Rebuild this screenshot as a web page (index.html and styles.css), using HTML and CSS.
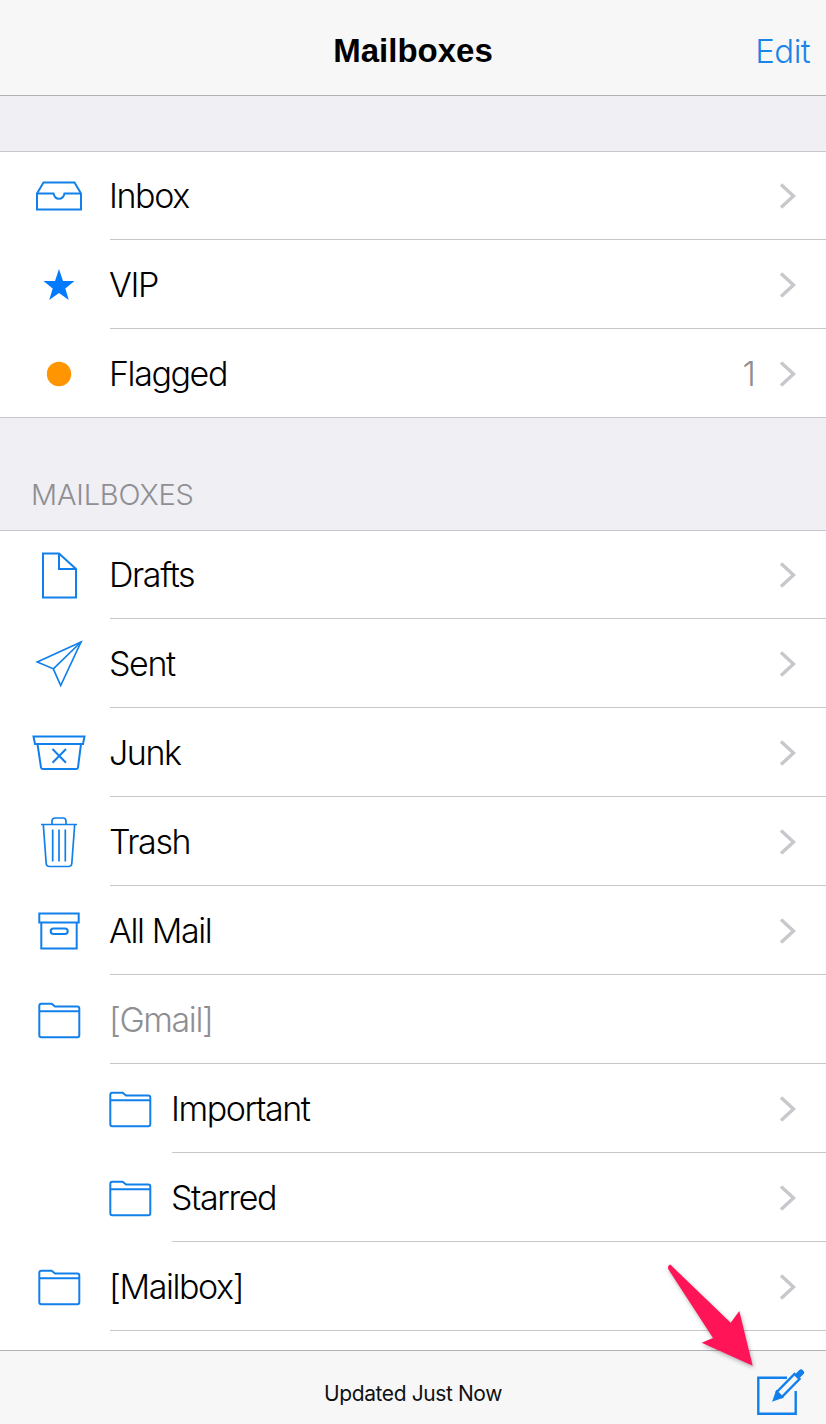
FILE: index.html
```html
<!DOCTYPE html>
<html lang="en">
<head>
<meta charset="utf-8">
<title>Mailboxes</title>
<link rel="stylesheet" href="styles.css">
</head>
<body>
<svg class="sprites" width="0" height="0" aria-hidden="true">
  <defs>
    <symbol id="i-chevron" viewBox="0 0 20 28"><path d="M3 2.5 L15.5 14 L3 25.5"/></symbol>
    <symbol id="i-folder" viewBox="0 0 60 60"><path d="M12.3 13.8H22.7L26 16.5H48.3a2 2 0 0 1 2 2V45.2a2 2 0 0 1-2 2H12.3a2 2 0 0 1-2-2V15.8a2 2 0 0 1 2-2Z"/><path d="M10.3 21.2H50.3"/></symbol>
  </defs>
</svg>
<div class="app">
  <header class="navbar">
    <span class="nav-side"></span>
    <h1 class="nav-title">Mailboxes</h1>
    <a class="nav-edit">Edit</a>
  </header>

  <main class="content">
    <ul class="group group-top">
      <li class="row">
        <svg class="icon" viewBox="0 0 60 60"><path d="M8 43.5V27.5L14.5 16.5H45.5L52 27.5V43.5Z"/><path d="M8 27.5H24.5C26 34.5 34 34.5 35.5 27.5H52"/></svg>
        <div class="row-main"><span class="label">Inbox</span><svg class="chevron"><use href="#i-chevron"/></svg></div>
      </li>
      <li class="row">
        <svg class="icon" viewBox="0 0 60 60"><path class="solid-blue" d="M30 14L34 26H45.5L36.3 33.5L39.8 45L30 38L20.2 45L23.7 33.5L14.5 26H26Z"/></svg>
        <div class="row-main"><span class="label">VIP</span><svg class="chevron"><use href="#i-chevron"/></svg></div>
      </li>
      <li class="row">
        <svg class="icon" viewBox="0 0 60 60"><circle class="solid-orange" cx="30" cy="31" r="12.2"/></svg>
        <div class="row-main"><span class="label">Flagged</span><span class="count">1</span><svg class="chevron"><use href="#i-chevron"/></svg></div>
      </li>
    </ul>

    <h2 class="section-title">MAILBOXES</h2>

    <ul class="group">
      <li class="row">
        <svg class="icon" viewBox="0 0 60 60"><path d="M14 8.5H30L47 24V52.5H14Z"/><path d="M30 8.5V24H47"/></svg>
        <div class="row-main"><span class="label">Drafts</span><svg class="chevron"><use href="#i-chevron"/></svg></div>
      </li>
      <li class="row">
        <svg class="icon icon-thin" viewBox="0 0 60 60"><path d="M52 8L8.3 28L24.3 34.8L31.7 51.5Z"/><path d="M52 8L24.3 34.8"/></svg>
        <div class="row-main"><span class="label">Sent</span><svg class="chevron"><use href="#i-chevron"/></svg></div>
      </li>
      <li class="row">
        <svg class="icon" viewBox="0 0 60 60"><path d="M4.5 13.5H55.5L54 21H6Z"/><path d="M8.5 21L12 44.5Q12.3 46 14 46H47Q48.7 46 49 44.5L52 21"/><path d="M23.5 26L37 39.8M37 26L23.5 39.8"/></svg>
        <div class="row-main"><span class="label">Junk</span><svg class="chevron"><use href="#i-chevron"/></svg></div>
      </li>
      <li class="row">
        <svg class="icon icon-thin" viewBox="0 0 60 60"><path d="M12 12.5H48"/><path d="M23 12.5V9Q23 6 26 6H34Q37 6 37 9V12.5"/><path d="M14.3 12.5L17.2 51.5Q17.5 54.5 20.5 54.5H39.5Q42.5 54.5 42.8 51.5L45.7 12.5"/><path d="M23.7 17.5V49.5M30 17.5V49.5M36.3 17.5V49.5"/></svg>
        <div class="row-main"><span class="label">Trash</span><svg class="chevron"><use href="#i-chevron"/></svg></div>
      </li>
      <li class="row">
        <svg class="icon" viewBox="0 0 60 60"><path d="M10.3 12.5H49.7V21.5H10.3Z"/><path d="M12.3 21.5V47.5H47.7V21.5"/><rect x="21.7" y="27.5" width="17" height="5.5" rx="2.75"/></svg>
        <div class="row-main"><span class="label">All Mail</span><svg class="chevron"><use href="#i-chevron"/></svg></div>
      </li>
      <li class="row">
        <svg class="icon"><use href="#i-folder"/></svg>
        <div class="row-main"><span class="label label-muted">[Gmail]</span></div>
      </li>
      <li class="row row-nested">
        <svg class="icon"><use href="#i-folder"/></svg>
        <div class="row-main"><span class="label">Important</span><svg class="chevron"><use href="#i-chevron"/></svg></div>
      </li>
      <li class="row row-nested">
        <svg class="icon"><use href="#i-folder"/></svg>
        <div class="row-main"><span class="label">Starred</span><svg class="chevron"><use href="#i-chevron"/></svg></div>
      </li>
      <li class="row">
        <svg class="icon"><use href="#i-folder"/></svg>
        <div class="row-main"><span class="label">[Mailbox]</span><svg class="chevron"><use href="#i-chevron"/></svg></div>
      </li>
    </ul>
  </main>

  <footer class="toolbar">
    <span class="toolbar-side"></span>
    <span class="toolbar-status">Updated Just Now</span>
    <svg class="compose" viewBox="0 0 50 60">
      <path d="M31 19.8H2.3V55.8H39.7V33"/>
      <path d="M20.8 34L25.8 39L43.5 21L38.5 16Z"/>
      <path class="compose-fill" d="M18 41.8L20.8 34L25.8 39Z"/>
      <path class="compose-cap" d="M42.5 17L45 14.5"/>
    </svg>
  </footer>

  <svg class="callout-arrow" viewBox="0 0 110 120">
    <path d="M10 9.5Q11.5 10.5 12.5 11.8L70.7 67.7L79.3 56L92.7 110.7L41.7 87.7L53 83L8.5 14.5Q7 11 10 9.5Z"/>
  </svg>
</div>
</body>
</html>
```

FILE: styles.css
```css
* { box-sizing: border-box; }

html, body {
  margin: 0;
  padding: 0;
  height: 100%;
  overflow: hidden;
}

body {
  font-family: Inter, Roboto, "Liberation Sans", Arial, sans-serif;
  font-weight: 300;
  color: #000;
  background: #efeff4;
}

.sprites { position: absolute; }

.app {
  position: relative;
  width: 826px;
  height: 1424px;
  display: flex;
  flex-direction: column;
}

/* Navigation bar */
.navbar {
  flex: none;
  height: 96px;
  display: grid;
  grid-template-columns: 1fr auto 1fr;
  align-items: center;
  padding-top: 13px;
  padding-bottom: 7px;
  background: #f7f7f8;
  border-bottom: 1px solid #b2b2b6;
}

.nav-title {
  margin: 0;
  font-family: "Liberation Sans", Arial, sans-serif;
  font-size: 33px;
  font-weight: 700;
}

.nav-edit {
  justify-self: end;
  margin-right: 16px;
  font-size: 33px;
  letter-spacing: -0.6px;
  color: #1a84e8;
}

/* Scrolling list area */
.content {
  flex: 1;
  min-height: 0;
  overflow: hidden;
  padding-top: 55px;
}

.group {
  list-style: none;
  margin: 0;
  padding: 0;
  background: #fff;
  border-top: 1px solid #c8c7cc;
  border-bottom: 1px solid #c8c7cc;
}

.group:last-child {
  border-bottom: 0;
  height: 821px;
}

.row {
  height: 89px;
  display: flex;
  align-items: stretch;
}

.row:first-child { height: 88px; }

.group-top .row:last-child { height: 88px; }
.group-top .row:last-child .row-main { border-bottom: 0; }

.icon {
  flex: none;
  width: 60px;
  height: 60px;
  align-self: center;
  margin-left: 29px;
  margin-right: 21px;
  fill: none;
  stroke: #1280ea;
  stroke-width: 2;
}

.icon-thin { stroke-width: 1.7; }

.row-nested .icon {
  margin-left: 100px;
  margin-right: 12px;
}

.solid-blue { fill: #007aff; stroke: none; }
.solid-orange { fill: #ff9500; stroke: none; }

.row-main {
  flex: 1;
  min-width: 0;
  display: flex;
  align-items: center;
  padding-right: 28px;
  border-bottom: 1px solid #c8c7cc;
}

.label {
  flex: 1;
  margin-left: -1px;
  font-size: 34px;
  letter-spacing: -1.4px;
}

.label-muted { color: #8e8e93; }

.count {
  font-size: 34px;
  color: #8e8e93;
  margin-right: 22px;
}

.chevron {
  flex: none;
  width: 20px;
  height: 28px;
  fill: none;
  stroke: #c7c7cc;
  stroke-width: 3.4;
}

/* Rows after the first sit a pixel lower against their separator */
.row + .row .chevron { margin-top: 2px; }

.section-title {
  margin: 0;
  height: 112px;
  padding: 60px 0 0 31px;
  font-size: 29px;
  line-height: 34px;
  font-weight: 300;
  letter-spacing: -0.2px;
  color: #8e8e93;
}

/* Bottom toolbar */
.toolbar {
  flex: none;
  height: 74px;
  display: grid;
  grid-template-columns: 1fr auto 1fr;
  align-items: center;
  background: #f7f7f8;
  border-top: 1px solid #b2b2b6;
}

.toolbar-status {
  padding-top: 12px;
  font-size: 21px;
  font-weight: 400;
  letter-spacing: -0.4px;
  color: #111;
}

.compose {
  justify-self: end;
  width: 50px;
  height: 60px;
  margin-right: 20px;
  fill: none;
  stroke: #1280ea;
  stroke-width: 2.4;
}

.compose-fill { fill: #1280ea; }
.compose-cap { stroke-width: 6; stroke-linecap: round; }

/* Pink callout pointing at the compose button */
.callout-arrow {
  position: absolute;
  left: 660px;
  top: 1255px;
  width: 110px;
  height: 120px;
  fill: #ff1458;
  filter: drop-shadow(1px 2px 2px rgba(0, 0, 0, 0.3));
}
```
